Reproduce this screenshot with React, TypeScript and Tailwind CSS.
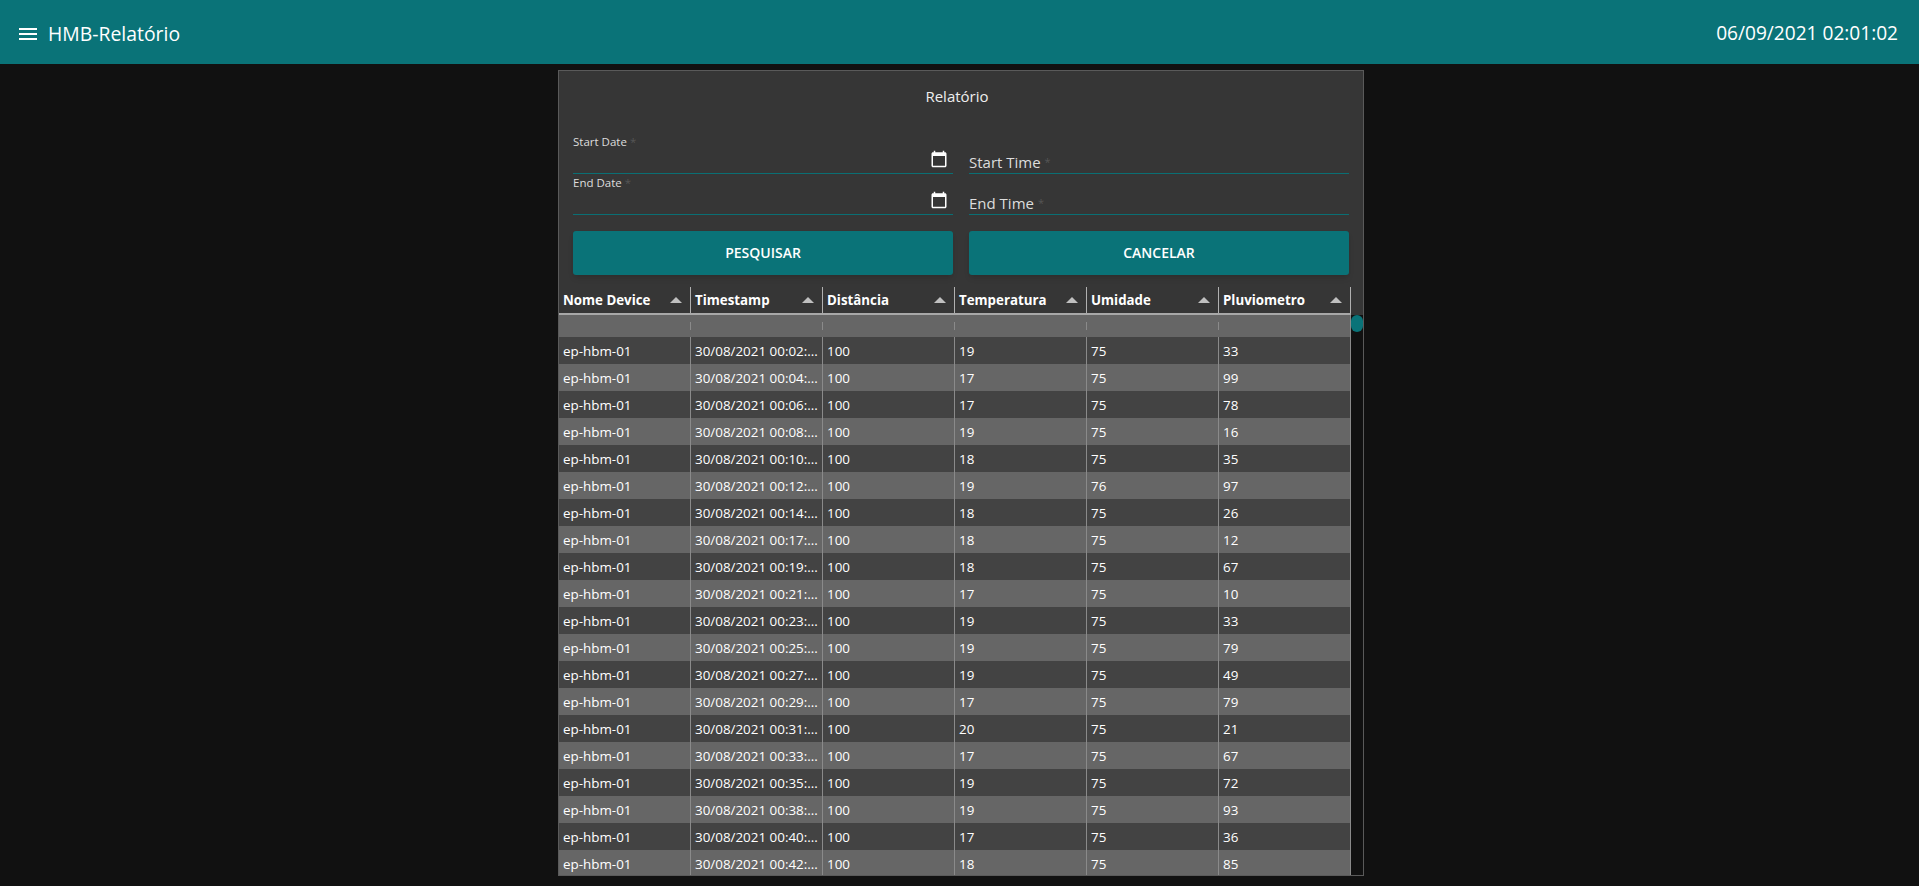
import React from 'react';

const font = "font-['Open_Sans','Noto_Sans',sans-serif]";

const columns = ['Nome Device', 'Timestamp', 'Distância', 'Temperatura', 'Umidade', 'Pluviometro'];

// time, temperatura, umidade, pluviometro
const rows: [string, number, number, number][] = [
  ['00:02', 19, 75, 33],
  ['00:04', 17, 75, 99],
  ['00:06', 17, 75, 78],
  ['00:08', 19, 75, 16],
  ['00:10', 18, 75, 35],
  ['00:12', 19, 76, 97],
  ['00:14', 18, 75, 26],
  ['00:17', 18, 75, 12],
  ['00:19', 18, 75, 67],
  ['00:21', 17, 75, 10],
  ['00:23', 19, 75, 33],
  ['00:25', 19, 75, 79],
  ['00:27', 19, 75, 49],
  ['00:29', 17, 75, 79],
  ['00:31', 20, 75, 21],
  ['00:33', 17, 75, 67],
  ['00:35', 19, 75, 72],
  ['00:38', 19, 75, 93],
  ['00:40', 17, 75, 36],
  ['00:42', 18, 75, 85],
];

function MenuIcon() {
  return (
    <svg width="24" height="24" viewBox="0 0 24 24" fill="currentColor">
      <path d="M3 18h18v-2H3v2zm0-5h18v-2H3v2zm0-7v2h18V6H3z" />
    </svg>
  );
}

function CalendarIcon() {
  return (
    <svg width="18" height="18" viewBox="0 0 24 24" fill="currentColor" className="absolute right-[5px] top-[17px] text-white">
      <path d="M20 3h-1V1h-2v2H7V1H5v2H4c-1.1 0-2 .9-2 2v16c0 1.1.9 2 2 2h16c1.1 0 2-.9 2-2V5c0-1.1-.9-2-2-2zm0 18H4V8h16v13z" />
    </svg>
  );
}

function DateField({ label }: { label: string }) {
  return (
    <div className="relative h-[41px] border-b border-[#0a6f74]">
      <span className="absolute left-0 top-[1px] text-[11.5px] leading-4 text-[#dddddd]">
        {label} <span className="text-[#555555]">*</span>
      </span>
      <CalendarIcon />
    </div>
  );
}

function TimeField({ label }: { label: string }) {
  return (
    <div className="relative h-[41px] border-b border-[#0a6f74]">
      <span className="absolute bottom-[1px] left-0 text-[15px] leading-5 text-[#dddddd]">
        {label} <span className="align-top text-[11px] text-[#555555]">*</span>
      </span>
    </div>
  );
}

function Cell({ children, last }: { children?: React.ReactNode; last?: boolean }) {
  return (
    <div className={`flex h-full w-[132px] shrink-0 items-center overflow-hidden whitespace-nowrap px-1 pt-[2px] text-[13.4px] text-white ${last ? '' : 'border-r border-[#8a8a8a]'}`}>
      {children}
    </div>
  );
}

export default function App() {
  return (
    <div className={`flex h-[886px] flex-col overflow-hidden bg-[#111111] ${font}`}>
      <header className="flex h-16 shrink-0 items-center justify-between bg-[#0a7378] pl-[16px] pr-[21px] pt-[3px] text-white">
        <div className="flex items-center gap-[8px]">
          <MenuIcon />
          <span className="text-[19.4px] leading-none">HMB-Relatório</span>
        </div>
        <span className="text-[19.1px] leading-none">06/09/2021 02:01:02</span>
      </header>

      <div className="flex justify-center pl-[3px] pt-[6px]">
        <main className="flex h-[806px] w-[806px] flex-col overflow-hidden border border-[#5a5a5a] bg-[#363636]">
          <h1 className="mt-[15px] pr-[8px] text-center text-[15px] leading-5 text-[#eeeeee]">Relatório</h1>

          <div className="mt-[27px] grid grid-cols-[380px_380px] gap-x-4 px-[14px]">
            <DateField label="Start Date" />
            <TimeField label="Start Time" />
            <DateField label="End Date" />
            <TimeField label="End Time" />
          </div>

          <div className="mt-4 grid grid-cols-[380px_380px] gap-x-4 px-[14px]">
            <button className="h-11 rounded-[3px] bg-[#0a7378] pb-[2px] text-[14px] font-semibold text-white shadow-md">PESQUISAR</button>
            <button className="h-11 rounded-[3px] bg-[#0a7378] pb-[2px] text-[14px] font-semibold text-white shadow-md">CANCELAR</button>
          </div>

          <div className="mt-[12px] flex min-h-0 flex-1">
            <div className="w-[792px] shrink-0">
              <div className="flex h-[28px] border-b-2 border-[#a8a8a8] bg-[#363636]">
                {columns.map((name) => (
                  <div key={name} className="flex h-[26px] w-[132px] shrink-0 items-center justify-between border-r border-[#b0b0b0] pl-1 pr-[8px]">
                    <span className="mt-[2px] text-[13.3px] font-bold text-white">{name}</span>
                    <span className="h-0 w-0 border-x-[6px] border-b-[6px] border-x-transparent border-b-[#c0c0c0]" />
                  </div>
                ))}
              </div>
              <div className="flex h-[22px] items-center bg-[#666666]">
                {columns.map((name, i) => (
                  <div key={name} className={`h-[8px] w-[132px] shrink-0 ${i === 5 ? '' : 'border-r border-[#8a8a8a]'}`} />
                ))}
              </div>
              {rows.map(([time, temp, hum, rain], i) => (
                <div key={time} className={`flex h-[27px] ${i % 2 === 0 ? 'bg-[#434343]' : 'bg-[#666666]'}`}>
                  <Cell>ep-hbm-01</Cell>
                  <Cell>30/08/2021 {time}:...</Cell>
                  <Cell>100</Cell>
                  <Cell>{temp}</Cell>
                  <Cell>{hum}</Cell>
                  <Cell last>{rain}</Cell>
                </div>
              ))}
            </div>
            <div className="-ml-px mt-[28px] w-[14px] shrink-0 border-l border-[#8a8a8a] bg-[#111111]">
              <div className="h-[17px] w-3 rounded-full bg-[#0a7378]" />
            </div>
          </div>
        </main>
      </div>
    </div>
  );
}
